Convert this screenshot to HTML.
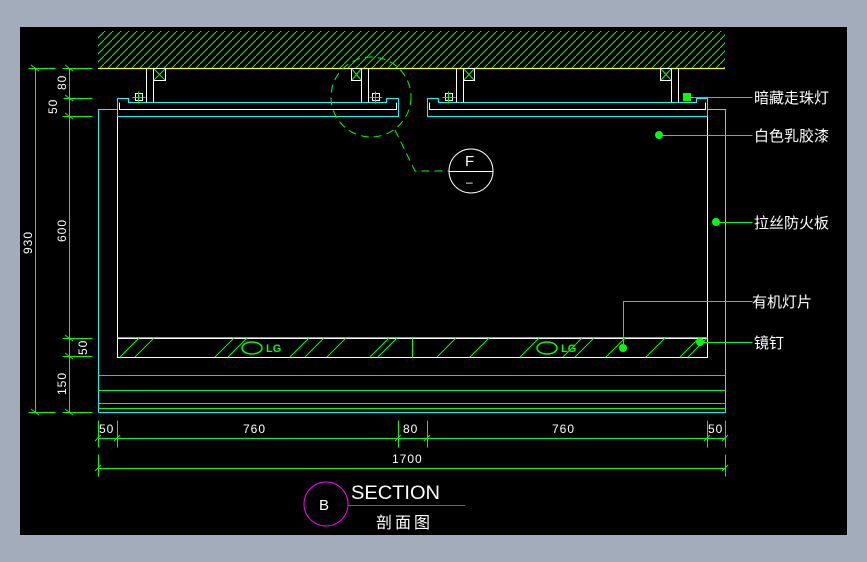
<!DOCTYPE html>
<html><head><meta charset="utf-8"><style>
html,body{margin:0;padding:0;background:#a3acbb;}
svg{display:block}
text{font-family:"Liberation Sans","Noto Sans CJK SC",sans-serif;fill:#fff}
</style></head><body>
<svg width="867" height="562" viewBox="0 0 867 562" xmlns="http://www.w3.org/2000/svg">
<defs>
<pattern id="h" width="8" height="8" patternUnits="userSpaceOnUse">
<line x1="0" y1="8" x2="8" y2="0" stroke="#00ff00" stroke-width="1"/>
</pattern>
<clipPath id="strip"><rect x="118" y="338" width="589" height="19"/></clipPath>
</defs>
<rect x="0" y="0" width="867" height="562" fill="#a3acbb"/>
<rect x="20" y="27" width="827" height="508" fill="#000"/>
<rect x="98" y="31" width="627" height="37" fill="url(#h)"/>
<line x1="98" y1="68.5" x2="725" y2="68.5" stroke="#ffff00" stroke-width="1.2"/>
<g fill="none" stroke-width="1" shape-rendering="crispEdges" transform="translate(0.5,0.5)">
<path d="M98 412 V109 H117 M707 109 H725 V412 H98" stroke="#00ffff"/>
<path d="M117 116 V357 H707 V116" stroke="#fff"/>
<path d="M117 98 H128 V102 H386 V98 H398 V116 H117 Z" stroke="#00ffff"/>
<path d="M119 102 V109 H396 V102" stroke="#fff"/>
<path d="M427 98 H438 V102 H696 V98 H707 V116 H427 Z" stroke="#00ffff"/>
<path d="M429 102 V109 H705 V102" stroke="#fff"/>
<g stroke="#fff">
<path d="M146 68 V102 M153 68 V102 M153 68 H165 V80 H153"/>
<path d="M361 68 V102 M368 68 V102 M361 68 H351 V80 H361"/>
<path d="M456 68 V102 M463 68 V102 M463 68 H474 V80 H463"/>
<path d="M671 68 V102 M678 68 V102 M671 68 H660 V80 H671"/>
<rect x="135" y="93" width="7" height="7"/><rect x="372" y="93" width="7" height="7"/>
<rect x="445" y="93" width="7" height="7"/>
</g>
<g stroke="#00ff00"><path d="M132 97 H145 M138 91 V103 M369 97 H382 M375 91 V103 M442 97 H455 M448 91 V103"/></g>
<line x1="117" y1="337" x2="707" y2="337" stroke="#00ff00"/>
<line x1="117" y1="338" x2="707" y2="338" stroke="#fff"/>
<line x1="412" y1="338" x2="412" y2="357" stroke="#00ff00"/>
<g stroke="#00ff00"><path d="M98 375 H725 M98 390 H725 M98 403 H725 M98 408 H725"/></g>
<g stroke="#00ff00">
<path d="M35 68 V412 M69 68 V412 M28 68 H55 M62 68 H92 M63 98 H92 M62 116 H92 M62 338 H92 M62 356 H92 M28 412 H55 M62 412 H92"/>
<path d="M98 438 H725 M98 468 H725 M98 420 V447 M117 420 V447 M398 420 V447 M427 420 V447 M707 420 V447 M725 420 V447 M98 454 V476 M725 454 V476"/>
<path d="M686 97 H752 M659 135 H752 M716 222 H752 M623 348 V301 H752 M700 342 H752"/>
</g>
<line x1="348" y1="505" x2="465" y2="505" stroke="#ff00ff"/>
<line x1="449" y1="171" x2="493" y2="171" stroke="#fff"/>
</g>
<g fill="none" stroke="#00ff00">
<path d="M154 69 L165 80 M165 69 L154 80 M352 69 L361 80 M361 69 L352 80 M464 69 L474 80 M474 69 L464 80 M661 69 L671 80 M671 69 L661 80"/>
<g clip-path="url(#strip)">
<path d="M120 357 L139 338 M135 357 L154 338 M215 357 L234 338 M228 357 L247 338 M290 357 L309 338 M305 357 L324 338 M327 357 L346 338 M370 357 L389 338 M378 357 L397 338 M437 357 L456 338 M470 357 L489 338 M520 357 L539 338 M563 357 L582 338 M575 357 L594 338 M606 357 L625 338 M646 357 L665 338 M680 357 L699 338 M688 357 L707 338"/>
</g>
<path d="M31 65 L39 71 M65 65 L73 71 M65 95 L73 101 M65 113 L73 119 M65 335 L73 341 M65 353 L73 359 M31 409 L39 415 M65 409 L73 415"/>
<path d="M95 441 L101 435 M114 441 L120 435 M395 441 L401 435 M424 441 L430 435 M704 441 L710 435 M722 441 L728 435 M95 471 L101 465 M722 471 L728 465"/>
<circle cx="371" cy="97" r="40" stroke-dasharray="8,5"/>
<path d="M395 130 L415 171 H449" stroke-dasharray="8,5"/>
</g>
<circle cx="471" cy="171" r="22" stroke="#fff" fill="none"/>
<circle cx="326" cy="504" r="22" stroke="#ff00ff" fill="none"/>
<g fill="#00ff00">
<rect x="683" y="93" width="8" height="8"/><circle cx="687" cy="97" r="4"/>
<circle cx="659" cy="135" r="4"/><circle cx="716" cy="222" r="4"/>
<circle cx="623" cy="348" r="4"/><circle cx="700" cy="342" r="4"/>
</g>
<g fill="none" stroke="#00ff00" stroke-width="1.5">
<ellipse cx="252" cy="348" rx="10" ry="6"/><ellipse cx="547" cy="348" rx="10" ry="6"/>
</g>
<g font-weight="bold" font-size="11">
<text x="266" y="352" style="fill:#00ff00">LG</text>
<text x="561" y="352" style="fill:#00ff00">LG</text>
</g>
<g font-size="12" letter-spacing="1">
<text x="243" y="433">760</text><text x="552" y="433">760</text>
<text x="99" y="433">50</text><text x="403" y="433">80</text><text x="708" y="433">50</text>
<text x="392" y="463">1700</text>
<text transform="translate(66,90) rotate(-90)">80</text>
<text transform="translate(57,114) rotate(-90)">50</text>
<text transform="translate(66,242) rotate(-90)">600</text>
<text transform="translate(32,254) rotate(-90)">930</text>
<text transform="translate(87,355) rotate(-90)">50</text>
<text transform="translate(66,395) rotate(-90)">150</text>
</g>
<text x="465" y="166" font-family="Liberation Serif" font-size="15">F</text>
<text x="466" y="186" font-size="12">–</text>
<text x="319" y="510" font-family="Liberation Serif" font-size="15">B</text>
<text x="351" y="499" font-size="19" textLength="89" lengthAdjust="spacingAndGlyphs">SECTION</text>
<text x="376" y="528" font-size="16" letter-spacing="3">剖面图</text>
<g font-size="15">
<text x="754" y="103">暗藏走珠灯</text>
<text x="754" y="141">白色乳胶漆</text>
<text x="754" y="228">拉丝防火板</text>
<text x="752" y="307">有机灯片</text>
<text x="754" y="348">镜钉</text>
</g>
</svg>
</body></html>
